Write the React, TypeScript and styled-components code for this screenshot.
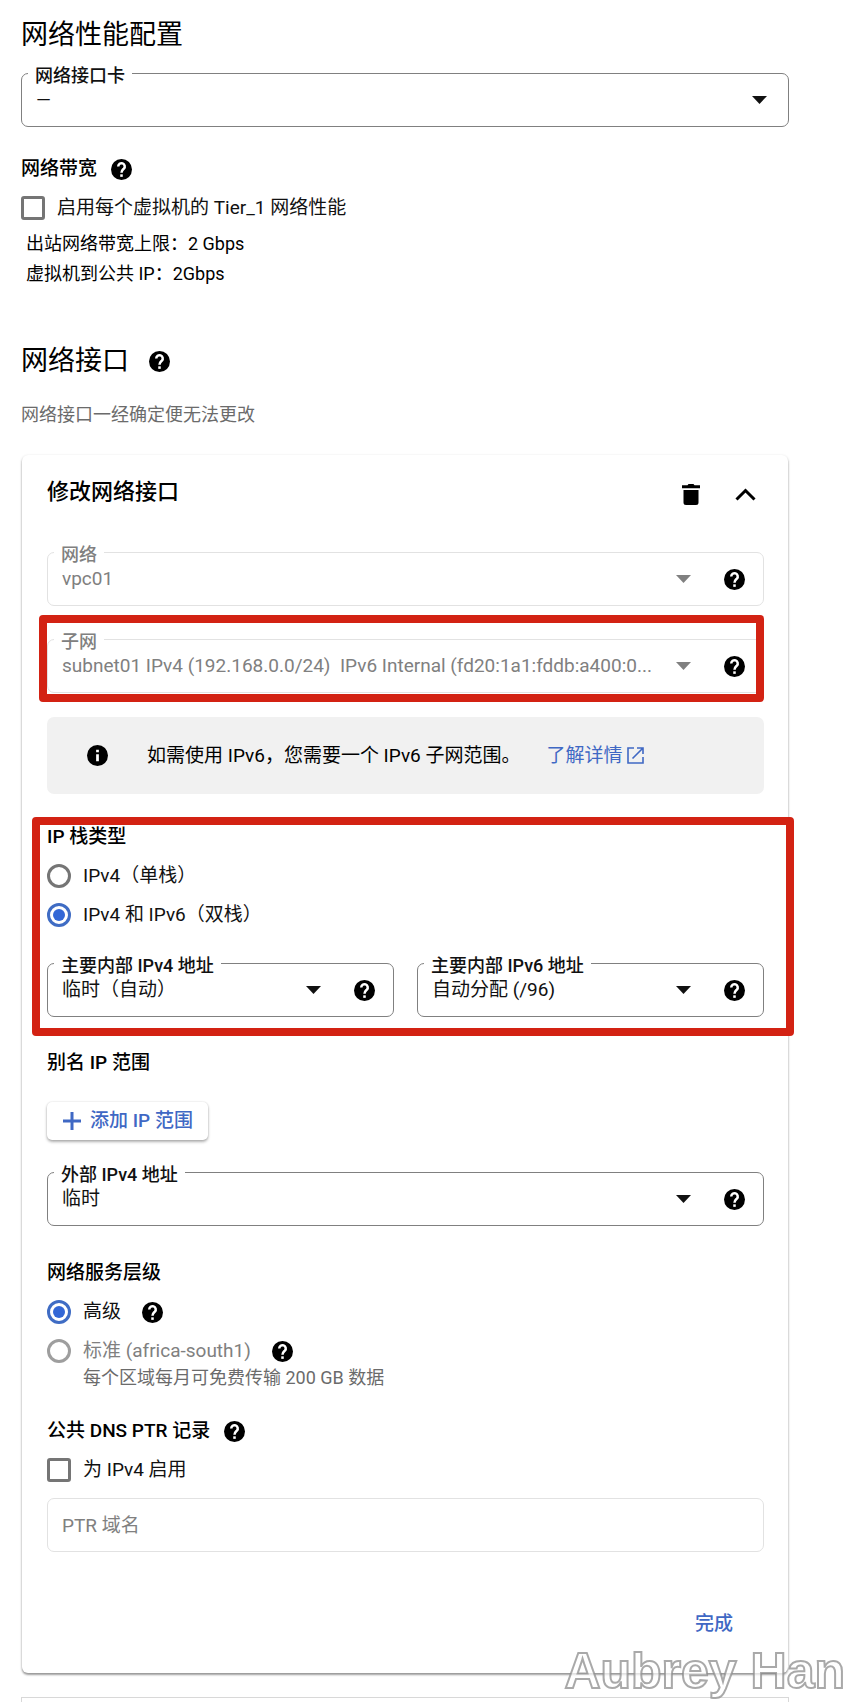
import React, { useId, useState } from "react";
import styled, { createGlobalStyle, css } from "styled-components";

const GlobalStyle = createGlobalStyle`
  *, *::before, *::after { box-sizing: border-box; }
  body {
    margin: 0;
    background: #fff;
    color: #000;
    font-family: Roboto, "Noto Sans CJK SC", sans-serif;
    font-size: 19px;
    line-height: 28px;
  }
  h1, h2, h3, h4, p { margin: 0; }
  button, input, select { font: inherit; color: inherit; }
`;

const Page = styled.main`
  position: relative;
  padding: 15px 67px 0 21px;
  overflow: hidden;
`;

const Title = styled.h1`
  font-size: 27px;
  line-height: 40px;
  font-weight: 400;
`;

const TitleRow = styled.div`
  display: flex;
  align-items: center;
  gap: 20px;
  margin-top: 52px;
`;

const GroupTitle = styled.h3`
  display: flex;
  align-items: center;
  gap: 14px;
  font-size: 19px;
  line-height: 28px;
  font-weight: 500;
`;

const Details = styled.div`
  padding: 7px 5px 0;
  font-size: 18px;
  line-height: 30px;
`;

const Note = styled.p`
  margin-top: 20px;
  font-size: 18px;
  line-height: 28px;
  color: #6b6b6b;
`;

const Card = styled.section`
  margin: 26px 1px 0;
  padding: 20px 24px 35px 25px;
  border-radius: 6px;
  background: #fff;
  box-shadow: 0 2px 2px rgba(0, 0, 0, 0.3), 0 1px 3px rgba(0, 0, 0, 0.2);
`;

const NextCard = styled.section`
  height: 5px;
  margin-top: 24px;
  border: 1px solid #d8d8d8;
  border-bottom: 0;
`;

const CardHead = styled.header`
  display: flex;
  align-items: center;
  justify-content: space-between;
  padding-right: 8px;
`;

const CardTitle = styled.h2`
  font-size: 22px;
  line-height: 34px;
  font-weight: 500;
`;

const CardActions = styled.div`
  display: flex;
  align-items: center;
  gap: 35px;
  padding-top: 4px;
`;

const IconButton = styled.button`
  display: inline-flex;
  flex: none;
  padding: 0;
  border: 0;
  background: none;
  cursor: pointer;
`;

const FieldBox = styled.div<{ $disabled?: boolean; $help?: boolean; $space?: number }>`
  position: relative;
  display: flex;
  align-items: center;
  height: 54px;
  min-width: 0;
  margin-top: ${(p) => p.$space ?? 0}px;
  padding: 0 ${(p) => (p.$help ? 18 : 21)}px 0 0;
  border: 1px solid ${(p) => (p.$disabled ? "#e2e2e2" : "#808080")};
  border-radius: 7px;
  gap: 33px;
  color: ${(p) => (p.$disabled ? "#808080" : "#111")};
`;

const FieldLabel = styled.label`
  position: absolute;
  left: 6px;
  top: -10px;
  padding: 0 7px;
  background: #fff;
  font-size: 18px;
  line-height: 24px;
  font-weight: 500;
`;

const SelectArea = styled.div`
  display: grid;
  flex: 1;
  min-width: 0;
  align-items: center;
  > * { grid-area: 1 / 1; }
  > svg { justify-self: end; pointer-events: none; }
`;

const NativeSelect = styled.select`
  appearance: none;
  width: 100%;
  height: 52px;
  padding: 0 20px 0 14px;
  border: 0;
  background: none;
  font-size: 19px;
  outline: none;
  opacity: 1;
  text-overflow: ellipsis;
`;

const TextInput = styled.input`
  width: 100%;
  height: 54px;
  margin-top: 14px;
  padding: 0 14px;
  border: 1px solid #e2e2e2;
  border-radius: 7px;
  background: #fff;
  font-size: 19px;
  &::placeholder { color: #808080; opacity: 1; }
`;

const highlight = css`
  content: "";
  position: absolute;
  border: 8px solid #d32213;
  border-radius: 4px;
  pointer-events: none;
`;

const SubnetHighlight = styled.div`
  position: relative;
  margin-top: 33px;
  &::after { ${highlight} inset: -24px 0 -9px -8px; }
`;

const StackHighlight = styled.div`
  position: relative;
  margin-top: 29px;
  &::after { ${highlight} inset: -6px -30px -19px -15px; }
`;

const Banner = styled.div`
  display: flex;
  align-items: center;
  margin-top: 24px;
  padding: 24px 40px;
  border-radius: 7px;
  background: #f1f1f1;
  line-height: 29px;
`;

const BannerText = styled.p`
  padding-left: 39px;
`;

const Link = styled.a`
  display: inline-flex;
  align-items: center;
  gap: 4px;
  margin-left: 26px;
  color: #3f68c4;
  text-decoration: none;
`;

const OptionRow = styled.div`
  display: flex;
  align-items: center;
  gap: 21px;
  height: 28px;
  margin-top: 11px;
`;

const OptionLabel = styled.label<{ $muted?: boolean }>`
  display: flex;
  align-items: center;
  gap: 12px;
  color: ${(p) => (p.$muted ? "#808080" : "#111")};
`;

const Checkbox = styled.input`
  appearance: none;
  width: 24px;
  height: 24px;
  margin: 0;
  border: 3px solid #757575;
  border-radius: 3px;
  background: #fff;
  &:checked { border-color: #3367d6; background: #3367d6; }
`;

const Radio = styled.input`
  appearance: none;
  display: grid;
  place-items: center;
  width: 24px;
  height: 24px;
  margin: 0;
  border: 3px solid #757575;
  border-radius: 50%;
  &:disabled { border-color: #9e9e9e; }
  &:checked { border-color: #3f6cc4; }
  &:checked::after {
    content: "";
    width: 12px;
    height: 12px;
    border-radius: 50%;
    background: #3367d6;
  }
`;

const OptionHint = styled.p`
  padding-left: 36px;
  font-size: 18px;
  line-height: 26px;
  color: #6b6b6b;
`;

const AddressGrid = styled.div`
  display: grid;
  grid-template-columns: 1fr 1fr;
  gap: 23px;
  margin-top: 34px;
`;

const Section = styled.div<{ $space: number }>`
  margin-top: ${(p) => p.$space}px;
`;

const RaisedButton = styled.button`
  display: flex;
  align-items: center;
  gap: 8px;
  height: 38px;
  margin-top: 25px;
  padding: 0 15px;
  border: 0;
  border-radius: 5px;
  background: #fff;
  color: #3f68c4;
  font-weight: 500;
  box-shadow: 0 2px 3px rgba(0, 0, 0, 0.3), 0 0 2px rgba(0, 0, 0, 0.15);
`;

const CardFooter = styled.footer`
  display: flex;
  justify-content: flex-end;
  margin-top: 58px;
  padding-right: 31px;
`;

const TextButton = styled.button`
  padding: 0;
  border: 0;
  background: none;
  color: #3f68c4;
  font-weight: 500;
`;

const Watermark = styled.div`
  position: absolute;
  right: 11px;
  bottom: 4px;
  font-family: "Liberation Sans", Arial, sans-serif;
  font-size: 50px;
  line-height: 54px;
  font-weight: 700;
  color: rgba(255, 255, 255, 0.7);
  -webkit-text-stroke: 2px rgba(140, 140, 140, 0.75);
  pointer-events: none;
`;

const HelpIcon = () => (
  <svg width="21" height="21" viewBox="2 2 20 20" aria-hidden="true">
    <circle cx="12" cy="12" r="10" fill="#000" />
    <path d="M8.900 9.200a3.100 3.100 0 1 1 5.400 2C13.100 12.400 12 12.800 12 15.200" fill="none" stroke="#fff" strokeWidth="2.400" />
    <rect x="10.800" y="16.600" width="2.400" height="2.400" fill="#fff" />
  </svg>
);

const InfoIcon = () => (
  <svg width="21" height="21" viewBox="2 2 20 20" aria-hidden="true">
    <circle cx="12" cy="12" r="10" fill="#000" />
    <path d="M10.700 6.500h2.600v2.500h-2.600zM10.700 10.800h2.600v6.700h-2.600z" fill="#fff" />
  </svg>
);

const CaretIcon = () => (
  <svg width="15" height="8" viewBox="0 0 15 8" aria-hidden="true">
    <path d="M0 0h15L7.500 8z" fill="currentColor" />
  </svg>
);

const TrashIcon = () => (
  <svg width="18" height="21" viewBox="0 0 18 21" aria-hidden="true">
    <path d="M0 1.200h5.500L6.500 0h5l1 1.200H18v3H0zM1.500 6h15v12.500a2.500 2.500 0 0 1-2.500 2.500H4a2.500 2.500 0 0 1-2.500-2.500z" />
  </svg>
);

const ChevronUpIcon = () => (
  <svg width="21" height="13" viewBox="0 0 21 13" aria-hidden="true">
    <path d="M1.500 11.500 10.500 2.500l9 9" fill="none" stroke="#000" strokeWidth="3" />
  </svg>
);

const ExternalIcon = () => (
  <svg width="17" height="17" viewBox="0 0 17 17" fill="none" stroke="currentColor" strokeWidth="1.600" aria-hidden="true">
    <path d="M7 1H1v15h15v-6M10 1h6v6M16 1 5.500 11.500" />
  </svg>
);

const PlusIcon = () => (
  <svg width="20" height="20" viewBox="0 0 20 20" aria-hidden="true">
    <path d="M10 1v18M1 10h18" stroke="currentColor" strokeWidth="3" />
  </svg>
);

const Help = () => (
  <IconButton type="button" aria-label="帮助">
    <HelpIcon />
  </IconButton>
);

type SelectFieldProps = {
  label: string;
  value: string;
  disabled?: boolean;
  help?: boolean;
  space?: number;
};

function SelectField({ label, value, disabled, help = true, space }: SelectFieldProps) {
  const id = useId();
  return (
    <FieldBox $disabled={disabled} $help={help} $space={space}>
      <FieldLabel htmlFor={id}>{label}</FieldLabel>
      <SelectArea>
        <NativeSelect id={id} disabled={disabled}>
          <option>{value}</option>
        </NativeSelect>
        <CaretIcon />
      </SelectArea>
      {help && <Help />}
    </FieldBox>
  );
}

export default function App() {
  const [tier1, setTier1] = useState(false);
  const [ptr, setPtr] = useState(false);
  const [stack, setStack] = useState("dual");

  return (
    <>
      <GlobalStyle />
      <Page>
        <Title>网络性能配置</Title>
        <SelectField label="网络接口卡" value="—" help={false} space={18} />

        <Section $space={28}>
          <GroupTitle>
            网络带宽 <Help />
          </GroupTitle>
          <OptionRow>
            <OptionLabel>
              <Checkbox type="checkbox" checked={tier1} onChange={(e) => setTier1(e.target.checked)} />
              启用每个虚拟机的 Tier_1 网络性能
            </OptionLabel>
          </OptionRow>
          <Details>
            <p>出站网络带宽上限：2 Gbps</p>
            <p>虚拟机到公共 IP：2Gbps</p>
          </Details>
        </Section>

        <TitleRow>
          <Title as="h2">网络接口</Title>
          <Help />
        </TitleRow>
        <Note>网络接口一经确定便无法更改</Note>

        <Card>
          <CardHead>
            <CardTitle>修改网络接口</CardTitle>
            <CardActions>
              <IconButton type="button" aria-label="删除">
                <TrashIcon />
              </IconButton>
              <IconButton type="button" aria-label="收起">
                <ChevronUpIcon />
              </IconButton>
            </CardActions>
          </CardHead>

          <SelectField label="网络" value="vpc01" disabled space={43} />
          <SubnetHighlight>
            <SelectField
              label="子网"
              value={"subnet01 IPv4 (192.168.0.0/24)\u00a0 IPv6 Internal (fd20:1a1:fddb:a400:0..."}
              disabled
            />
          </SubnetHighlight>

          <Banner>
            <InfoIcon />
            <BannerText>
              如需使用 IPv6，您需要一个 IPv6 子网范围。
              <Link href="#learn-more">
                了解详情
                <ExternalIcon />
              </Link>
            </BannerText>
          </Banner>

          <StackHighlight>
            <GroupTitle>IP 栈类型</GroupTitle>
            <OptionRow>
              <OptionLabel>
                <Radio type="radio" name="stack" checked={stack === "single"} onChange={() => setStack("single")} />
                IPv4（单栈）
              </OptionLabel>
            </OptionRow>
            <OptionRow>
              <OptionLabel>
                <Radio type="radio" name="stack" checked={stack === "dual"} onChange={() => setStack("dual")} />
                IPv4 和 IPv6（双栈）
              </OptionLabel>
            </OptionRow>
            <AddressGrid>
              <SelectField label="主要内部 IPv4 地址" value="临时（自动）" />
              <SelectField label="主要内部 IPv6 地址" value="自动分配 (/96)" />
            </AddressGrid>
          </StackHighlight>

          <Section $space={32}>
            <GroupTitle>别名 IP 范围</GroupTitle>
            <RaisedButton type="button">
              <PlusIcon />
              添加 IP 范围
            </RaisedButton>
          </Section>

          <SelectField label="外部 IPv4 地址" value="临时" space={32} />

          <Section $space={33}>
            <GroupTitle>网络服务层级</GroupTitle>
            <OptionRow>
              <OptionLabel>
                <Radio type="radio" name="tier" defaultChecked />
                高级
              </OptionLabel>
              <Help />
            </OptionRow>
            <OptionRow>
              <OptionLabel $muted>
                <Radio type="radio" name="tier" disabled />
                标准 (africa-south1)
              </OptionLabel>
              <Help />
            </OptionRow>
            <OptionHint>每个区域每月可免费传输 200 GB 数据</OptionHint>
          </Section>

          <Section $space={26}>
            <GroupTitle>
              公共 DNS PTR 记录 <Help />
            </GroupTitle>
            <OptionRow>
              <OptionLabel>
                <Checkbox type="checkbox" checked={ptr} onChange={(e) => setPtr(e.target.checked)} />
                为 IPv4 启用
              </OptionLabel>
            </OptionRow>
            <TextInput type="text" aria-label="PTR 域名" placeholder="PTR 域名" disabled={!ptr} />
          </Section>

          <CardFooter>
            <TextButton type="button">完成</TextButton>
          </CardFooter>
        </Card>

        <NextCard />
        <Watermark>Aubrey Han</Watermark>
      </Page>
    </>
  );
}
